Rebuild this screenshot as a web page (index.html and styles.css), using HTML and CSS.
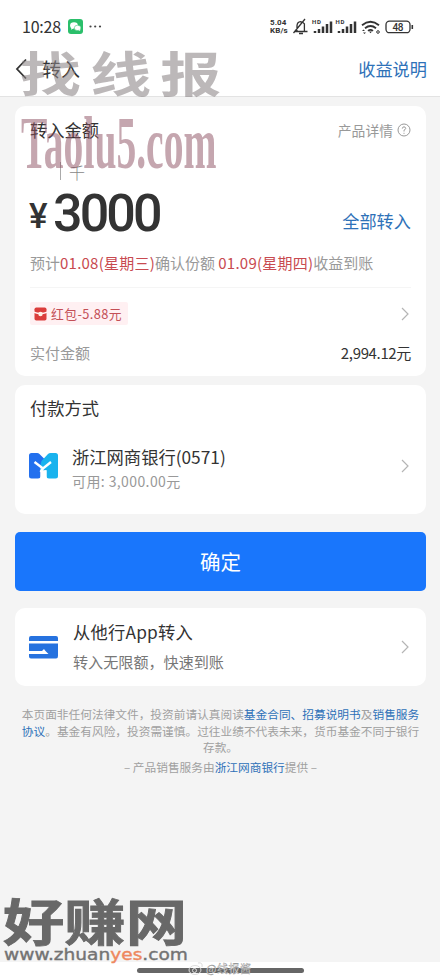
FILE: index.html
```html
<!DOCTYPE html>
<html lang="zh-CN">
<head>
<meta charset="utf-8">
<title>转入</title>
<link rel="stylesheet" href="styles.css">
</head>
<body>
<div class="screen">
  <header class="header">
    <div class="status">
      <span class="time">10:28</span>
      <svg class="chat" width="15" height="15" viewBox="0 0 15 15"><rect width="15" height="15" rx="3" fill="#2bbf6b"/><ellipse cx="6" cy="6.4" rx="3.9" ry="3.2" fill="#fff"/><path d="M3.5 8.5 3 10.7 5.6 9.3" fill="#fff"/><ellipse cx="9.6" cy="8.9" rx="3.3" ry="2.7" fill="#fff" stroke="#2bbf6b" stroke-width=".5"/><path d="m10.5 11 1.7.9-.3-1.8" fill="#fff"/></svg>
      <svg class="dots" width="13" height="3" viewBox="0 0 13 3" fill="#444"><circle cx="1.5" cy="1.5" r="1.1"/><circle cx="6.2" cy="1.5" r="1.1"/><circle cx="11" cy="1.5" r="1.1"/></svg>
      <span class="speed"><b>5.04</b><b>KB/s</b></span>
      <svg class="indicators" width="147" height="20" viewBox="0 0 147 20" fill="none" stroke="#333">
        <path d="M3 14.5h12.500M5 14V8.500Q5.300 5 8.500 4.600 11 4.600 12.400 6.800V14M7 16.500h4M1.500 16 13 2" stroke-width="1.300"/>
        <path d="M23 16v-2M27 16v-4M31 16V9.500M35 16V7M39 16V4.500" stroke-width="2.500"/>
        <path d="M47 16v-2M51 16v-4M55 16V9.500M59 16V7M63 16V4.500" stroke-width="2.500"/>
        <path d="M70 8.200Q78.500 1.200 87 8.200M73 11.200Q78.500 6.700 84 11.200M76 13.900Q78.500 12 81 13.900" stroke-width="1.800"/>
        <path d="m77 14.500 1.500 1.700 1.500-1.700ZM70 14l1.500-1.500L73 14ZM71 15.500h3L72.500 17Z" fill="#333" stroke="none"/><circle cx="86" cy="15" r="1.300"/>
        <rect x="94" y="4.200" width="24" height="11.500" rx="3.500" stroke-width="1.300"/><path d="M120.300 8v4" stroke-width="1.600"/>
        <text x="20" y="6.500" textLength="9">HD</text><text x="43.500" y="6.500" textLength="9">HD</text><text class="charge" x="100.500" y="13.500" textLength="11">48</text>
      </svg>
    </div>
    <div class="nav">
      <svg class="back" width="13" height="22" viewBox="0 0 13 22"><path d="M11 1.500 2 11l9 9.500" fill="none" stroke="#333" stroke-width="1.800"/></svg>
      <h1>转入</h1><a>收益说明</a>
    </div>
  </header>
  <main>
    <section class="card amount">
      <div class="row title"><h2>转入金额</h2><span class="detail">产品详情 <svg width="14" height="14" viewBox="0 0 14 14" fill="none" stroke="#999"><circle cx="7" cy="7" r="6"/><path d="M5.300 5.600Q5.500 3.800 7 3.800T8.700 5.500Q8.500 6.500 7 7.200V8.500M7 9.800v1"/></svg></span></div>
      <div class="unit"><i></i><span>千</span></div>
      <div class="row value"><span class="yen">¥</span><strong>3000</strong><a>全部转入</a></div>
      <p class="schedule">预计<b>01.08(星期三)</b>确认份额 <b>01.09(星期四)</b>收益到账</p>
      <div class="row coupon"><span class="tag"><svg width="13" height="14" viewBox="0 0 13 14"><rect x=".5" y=".5" width="12" height="13" rx="1.800" fill="#db3d3b"/><path d="M0 4.500Q6.500 7 13 4.500v1.500Q6.500 8.500 0 6Z" fill="#fff0f1"/><circle cx="6.500" cy="7" r="2.200" fill="#fff0e5"/></svg><span>红包-5.88元</span></span><svg class="chev" width="8" height="14" viewBox="0 0 8 14"><path d="m1 1 6 6-6 6"/></svg></div>
      <div class="row payable"><span>实付金额</span><em>2,994.12元</em></div>
    </section>
    <section class="card method">
      <h2>付款方式</h2>
      <div class="row item"><svg class="logo" width="29" height="26" viewBox="0 0 29 26"><path d="M2.500 0H8q1.500 0 2.500 1l5 5-4 9V23q0 2.500-2.500 2.500H2.500Q0 25.500 0 23V2.500Q0 0 2.500 0" fill="#2370ee"/><path d="m12.500 8 6.500-7q1-1 2.500-1h5Q29 0 29 2.500V23q0 2.500-2.500 2.500H20q-2.500 0-2.500-2.500v-6l-6 1V12Z" fill="#19b3ee"/><path d="m5.500 9 8.500 6.500 8-6.500M14 15.500 11.500 19" fill="none" stroke="#fff" stroke-width="2.400"/><path d="M11.500 17.500h6V26h-6Z" fill="#fff"/></svg>
        <div class="copy"><h3>浙江网商银行(0571)</h3><p>可用: 3,000.00元</p></div><svg class="chev" width="8" height="14" viewBox="0 0 8 14"><path d="m1 1 6 6-6 6"/></svg></div>
    </section>
    <button>确定</button>
    <section class="card other"><svg class="logo" width="29" height="23" viewBox="0 0 29 23"><path d="M2 0h25q2 0 2 2v3H0V2q0-2 2-2M0 7.500h29V20q0 2.500-2 2.500H2q-2 0-2-2V18h19.500L16 14.500l-1-1.500-2 2H0Z" fill="#2672df"/></svg>
      <div class="copy"><h3>从他行App转入</h3><p>转入无限额，快速到账</p></div><svg class="chev" width="8" height="14" viewBox="0 0 8 14"><path d="m1 1 6 6-6 6"/></svg></section>
    <div class="legal"><p>本页面非任何法律文件，投资前请认真阅读<a>基金合同、招募说明书</a>及<a>销售服务</a></p><p><a>协议</a>。基金有风险，投资需谨慎。过往业绩不代表未来，货币基金不同于银行</p><p>存款。</p><p class="provider">– 产品销售服务由<a>浙江网商银行</a>提供 –</p></div>
  </main>
  <footer><div class="handle"></div></footer>
  <svg class="overlay" width="440" height="979" viewBox="0 0 440 979">
    <g class="brush"><text transform="translate(20 92) scale(1.150 .9)" font-size="53"><tspan x="0">找</tspan><tspan x="61">线</tspan><tspan x="122">报</tspan></text></g>
    <text class="site" transform="translate(21 168) scale(.5 1)" textLength="391" lengthAdjust="spacingAndGlyphs">Taolu5.com</text>
    <text class="brand" transform="translate(3 940.500) scale(1 .83)" textLength="184" lengthAdjust="spacingAndGlyphs">好赚网</text>
    <text class="domain" x="4" y="960" textLength="184" lengthAdjust="spacingAndGlyphs">www.zhuan<tspan>yes</tspan>.com</text>
    <g class="weibo"><ellipse cx="195" cy="970" rx="6" ry="4.500"/><circle cx="194.500" cy="970.500" r="2"/><path d="M198 963q5-1 4 4"/><text x="206" y="973" textLength="45">@线报酱</text></g>
  </svg>
</div>
</body>
</html>
```
FILE: styles.css
```css
* { box-sizing: border-box; }
body { margin: 0; font-family: "Noto Sans CJK SC", sans-serif; color: #333; }
h1, h2, h3, p { margin: 0; font-weight: 400; }
a { color: #2e71b8; }
.screen { position: relative; width: 440px; height: 979px; overflow: hidden; background: #f4f4f4; display: flex; flex-direction: column; }
.header { height: 97px; flex: none; background: #fff; border-bottom: 1px solid #e3e3e3; }
.status { height: 40px; padding: 13px 0 0 22px; display: flex; align-items: center; }
.time { font: 400 16px/24px "Noto Sans CJK SC", sans-serif; width: 45px; letter-spacing: -.2px; position: relative; top: -1px; }
.chat { margin-left: 1px; }
.dots { margin-left: 6px; }
.speed { width: 20px; margin-left: 168px; display: grid; font: 8px/8px Roboto, sans-serif; letter-spacing: .1px; }
.indicators { margin-left: 2px; }
.indicators text { fill: #333; stroke: none; font: 700 6px Roboto, sans-serif; }
.indicators .charge { font-size: 10px; font-weight: 500; }
.nav { height: 56px; display: flex; align-items: center; padding: 1px 13px 0 15px; }
.nav h1 { font-size: 19px; line-height: 28px; margin-left: 14px; }
.nav a { margin-left: auto; font-size: 17.2px; }
main { flex: 1; padding: 9px 14px 0 15px; }
.card { background: #fff; border-radius: 10px; padding: 0 15px; }
.row { display: flex; align-items: center; }
.amount { height: 270px; }
.title { height: 47px; justify-content: space-between; }
h2 { font-size: 17.3px; line-height: 26px; }
.detail { display: flex; align-items: center; gap: 4px; color: #999; font-size: 13.800px; }
.unit { height: 29px; display: flex; padding: 9px 0 0 30px; gap: 8px; font-size: 16px; line-height: 20px; color: #888; font-weight: 300; }
.unit i { width: 1px; height: 18px; background: #aaa; }
.value { height: 63px; font-family: Roboto, sans-serif; }
.yen { font-size: 35px; line-height: 42px; font-weight: 500; width: 24px; padding-top: 6px; margin-left: -1px; margin-right: 1px; }
.value strong { font-size: 52px; font-weight: 500; letter-spacing: -2.900px; line-height: 60px; margin-left: -1px; }
.value a { margin-left: auto; padding-top: 14px; font: 17.2px/26px "Noto Sans CJK SC", sans-serif; }
.schedule { height: 43px; border-bottom: 1px solid #f5f5f5; color: #999; font-size: 15px; line-height: 36px; white-space: nowrap; }
.schedule b { color: #c84a50; font-weight: 400; letter-spacing: .23px; }
.coupon { height: 51px; justify-content: space-between; }
.tag { width: 98px; height: 23px; padding-left: 4px; display: flex; align-items: center; gap: 4px; background: #fff0f2; color: #c44f56; font-size: 12.800px; letter-spacing: .4px; white-space: nowrap; border-radius: 2px; }
.chev { margin-right: 2px; flex: none; fill: none; stroke: #b5b5b5; stroke-width: 1.200; }
.payable { height: 26px; justify-content: space-between; font-size: 15px; color: #999; }
.payable em { color: #333; font-style: normal; letter-spacing: -.35px; }
.method { height: 129px; margin-top: 9px; padding-top: 10px; }
.item { height: 70px; margin-top: 10px; }
.logo { flex: none; margin-left: -1px; }
.copy { margin: 0 auto 0 14px; }
.item .copy { padding-top: 5px; }
.item .copy p { letter-spacing: .4px; margin-top: -1px; }
h3 { font-size: 17.300px; line-height: 26px; }
.copy p { font-size: 14px; line-height: 24px; color: #999; }
button { display: block; width: 100%; height: 59px; margin: 18px 0 17px; padding: 0; border: 0; border-radius: 5px; background: #1976fc; color: #fff; font: 20.500px/59px "Noto Sans CJK SC", sans-serif; }
.other { height: 78px; display: flex; align-items: center; }
.other .copy { margin-left: 15px; padding-bottom: 2px; }
.other h3 { letter-spacing: .2px; }
.other .copy p { font-size: 15.100px; line-height: 24px; margin-top: 4px; color: #777; }
.legal { margin: 20px -5px 0; text-align: center; color: #a0a0a0; font-size: 11.700px; line-height: 16.500px; white-space: nowrap; }
.legal .provider { margin-top: 3px; }
footer { height: 17px; background: #fff; padding: 6px 0 0 137px; }
.handle { width: 167px; height: 5px; border-radius: 3px; background: #666; }
.overlay { position: absolute; inset: 0; pointer-events: none; }
.brush { fill: #8b8587; fill-opacity: .58; font-weight: 700; }
.site { fill: #8c4d60; fill-opacity: .5; font: 700 75px "Liberation Serif", serif; }
.brand { fill: #686868; font-size: 60px; font-weight: 700; stroke: #686868; stroke-width: 1px; }
.domain { fill: #737373; stroke: #737373; stroke-width: .4px; font: 400 16.500px "DejaVu Sans", sans-serif; }
.domain tspan { fill: #ee885e; stroke: #ee885e; }
.weibo { fill: none; stroke: #ddd; stroke-width: 1; }
.weibo text { fill: #eee; stroke: #888; stroke-width: .3; font-size: 11px; }
```
